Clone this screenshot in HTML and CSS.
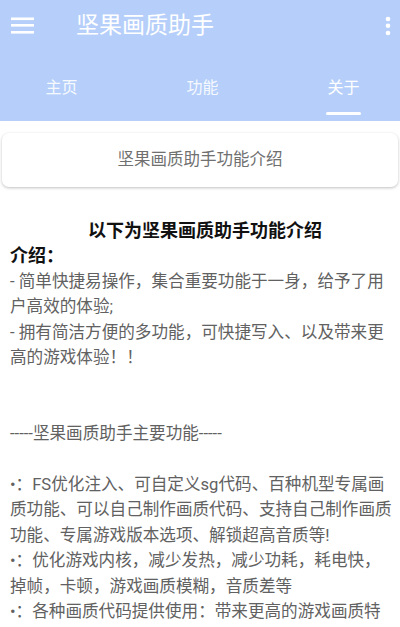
FILE: index.html
```html
<!DOCTYPE html>
<html>
<head>
<meta charset="UTF-8">
<title>坚果画质助手</title>
<link rel="stylesheet" href="styles.css">
</head>
<body>
	<!-- 顶部标题栏 + 选项卡 -->
	<div class="appbar">
		<div class="toolbar">
			<svg class="menu" width="23" height="24" viewBox="0 0 23 24">
				<rect x="0" y="3.5" width="23" height="2.6" fill="#fff"/>
				<rect x="0" y="10" width="23" height="2.6" fill="#fff"/>
				<rect x="0" y="17" width="23" height="2.6" fill="#fff"/>
			</svg>
			<span class="title">坚果画质助手</span>
			<svg class="more" width="6" height="24" viewBox="0 0 6 24">
				<circle cx="3" cy="5" r="2.3" fill="#fff"/>
				<circle cx="3" cy="11.8" r="2.3" fill="#fff"/>
				<circle cx="3" cy="19" r="2.3" fill="#fff"/>
			</svg>
		</div>
		<div class="tabs">
			<div class="tab">主页<i></i></div>
			<div class="tab">功能<i></i></div>
			<div class="tab active">关于<i></i></div>
		</div>
	</div>

	<div class="card">坚果画质助手功能介绍</div>

	<div class="content">
		<h3>以下为坚果画质助手功能介绍</h3>
		<h4>介绍：</h4>
		<p>- 简单快捷易操作，集合重要功能于一身，给予了用<br>户高效的体验;<br>- 拥有简洁方便的多功能，可快捷写入、以及带来更<br>高的游戏体验！！<br><br><br>-----坚果画质助手主要功能-----<br><br>•：FS优化注入、可自定义sg代码、百种机型专属画<br>质功能、可以自己制作画质代码、支持自己制作画质<br>功能、专属游戏版本选项、解锁超高音质等!<br>•：优化游戏内核，减少发热，减少功耗，耗电快，<br>掉帧，卡顿，游戏画质模糊，音质差等<br>•：各种画质代码提供使用：带来更高的游戏画质特</p>
	</div>
</body>
</html>
```

FILE: styles.css
```css
body{
	margin: 0;
	background: #fff;
	font-family: Roboto, "Noto Sans CJK SC", sans-serif;
}
.appbar{
	background: #b6cffa;
	color: #fff;
}
.toolbar{
	display: flex;
	align-items: center;
	height: 52px;
	padding-left: 11px;
}
.menu{
	display: block;
}
.title{
	margin-left: 42px;
	font-size: 23px;
	line-height: 30px;
}
.more{
	display: block;
	margin-left: auto;
	margin-right: 9px;
}
.tabs{
	display: flex;
	justify-content: space-between;
	padding: 27px 39px 6px 44px;
}
.tab{
	width: 35px;
	display: flex;
	flex-direction: column;
	align-items: center;
	font-size: 16px;
	line-height: 18px;
	color: rgba(255,255,255,0.9);
}
.tab i{
	display: block;
	width: 35px;
	height: 3px;
	margin-top: 15px;
	border-radius: 2px;
}
.tab.active{
	color: #fff;
}
.tab.active i{
	background: #fff;
}
.card{
	margin: 12px 2px 0;
	height: 54px;
	line-height: 54px;
	border-radius: 7px;
	box-shadow: 0 1px 3px rgba(0,0,0,0.25);
	text-align: center;
	font-size: 16.5px;
	color: #707070;
}
.content{
	padding: 31px 0 0 10px;
	line-height: 25.4px;
}
.content h3{
	margin: 0;
	text-align: center;
	font-size: 18px;
	color: #111;
}
.content h4{
	margin: 0;
	font-size: 18px;
	color: #111;
}
.content p{
	margin: 0;
	font-size: 16.6px;
	color: #616161;
	white-space: nowrap;
}
```
